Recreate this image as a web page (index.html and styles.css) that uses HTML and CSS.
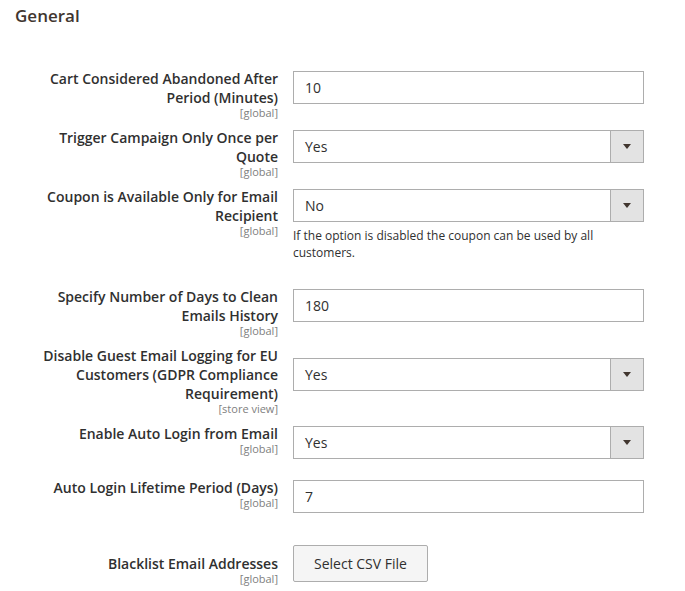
FILE: index.html
```html
<!DOCTYPE html>
<html lang="en">
<head>
<meta charset="utf-8">
<title>General</title>
<link rel="stylesheet" href="styles.css">
</head>
<body>
<section class="section">
  <h2 class="section-title">General</h2>
  <div class="form">
    <div class="row">
      <label class="label">Cart Considered Abandoned After Period (Minutes)<span class="scope">[global]</span></label>
      <div class="control"><input class="input" type="text" value="10"></div>
    </div>
    <div class="row">
      <label class="label">Trigger Campaign Only Once per Quote<span class="scope">[global]</span></label>
      <div class="control"><div class="select"><span class="select-value">Yes</span><span class="select-arrow"><span class="caret"></span></span></div></div>
    </div>
    <div class="row">
      <label class="label">Coupon is Available Only for Email Recipient<span class="scope">[global]</span></label>
      <div class="control">
        <div class="select"><span class="select-value">No</span><span class="select-arrow"><span class="caret"></span></span></div>
        <p class="note">If the option is disabled the coupon can be used by all customers.</p>
      </div>
    </div>
    <div class="row">
      <label class="label">Specify Number of Days to Clean Emails History<span class="scope">[global]</span></label>
      <div class="control"><input class="input" type="text" value="180"></div>
    </div>
    <div class="row row-lowered">
      <label class="label">Disable Guest Email Logging for EU Customers (GDPR Compliance Requirement)<span class="scope">[store view]</span></label>
      <div class="control"><div class="select"><span class="select-value">Yes</span><span class="select-arrow"><span class="caret"></span></span></div></div>
    </div>
    <div class="row">
      <label class="label">Enable Auto Login from Email<span class="scope">[global]</span></label>
      <div class="control"><div class="select"><span class="select-value">Yes</span><span class="select-arrow"><span class="caret"></span></span></div></div>
    </div>
    <div class="row">
      <label class="label">Auto Login Lifetime Period (Days)<span class="scope">[global]</span></label>
      <div class="control"><input class="input" type="text" value="7"></div>
    </div>
    <div class="row row-button">
      <label class="label">Blacklist Email Addresses<span class="scope">[global]</span></label>
      <div class="control"><button class="button" type="button">Select CSV File</button></div>
    </div>
  </div>
</section>
</body>
</html>
```
FILE: styles.css
```css
html, body {
  margin: 0;
  padding: 0;
  background: #ffffff;
}

body {
  font-family: "Open Sans", "Liberation Sans", sans-serif;
  color: #303030;
  width: 685px;
  height: 591px;
  overflow: hidden;
}

.section-title {
  margin: 0;
  padding: 4px 15px 0;
  font-size: 17px;
  line-height: 23px;
  font-weight: 600;
  color: #41362f;
}

.form {
  padding-top: 44px;
}

.row {
  display: flex;
  align-items: flex-start;
  padding-left: 38px;
}

.label {
  box-sizing: border-box;
  width: 240px;
  flex: none;
  margin-top: -2px;
  padding-bottom: 12px;
  text-align: right;
  font-size: 14px;
  line-height: 19px;
  font-weight: 600;
  color: #303030;
}

.scope {
  display: block;
  font-size: 11px;
  line-height: 11px;
  font-weight: 400;
  color: #808080;
}

.control {
  width: 351px;
  margin-left: 15px;
  padding-bottom: 21px;
  flex: none;
}

.input {
  display: block;
  box-sizing: border-box;
  width: 351px;
  height: 33px;
  margin: 0;
  padding: 0 11px;
  border: 1px solid #adadad;
  border-radius: 0;
  background: #ffffff;
  font-family: "Open Sans", "Liberation Sans", sans-serif;
  font-size: 14px;
  color: #303030;
  outline: none;
}

.select {
  display: flex;
  box-sizing: border-box;
  width: 351px;
  height: 33px;
  border: 1px solid #adadad;
  background: #ffffff;
}

.select-value {
  flex: 1;
  padding: 0 11px;
  font-size: 14px;
  line-height: 31px;
  color: #303030;
}

.select-arrow {
  display: flex;
  align-items: center;
  justify-content: center;
  width: 32px;
  border-left: 1px solid #adadad;
  background: #e3e3e3;
}

.caret {
  width: 0;
  height: 0;
  border-left: 4px solid transparent;
  border-right: 4px solid transparent;
  border-top: 5px solid #41362f;
}

.note {
  margin: 5px 0 7px;
  font-size: 12px;
  line-height: 17px;
  color: #303030;
}

.row-lowered .control {
  margin-top: 10px;
}

.row-button .control {
  margin-top: 11px;
}

.row-button .label {
  margin-top: 20px;
}

.button {
  display: block;
  box-sizing: border-box;
  height: 37px;
  padding: 0 20px;
  border: 1px solid #adadad;
  border-radius: 2px;
  background: #f5f5f5;
  font-family: "Open Sans", "Liberation Sans", sans-serif;
  font-size: 14px;
  line-height: 19px;
  color: #303030;
  cursor: pointer;
}
```
